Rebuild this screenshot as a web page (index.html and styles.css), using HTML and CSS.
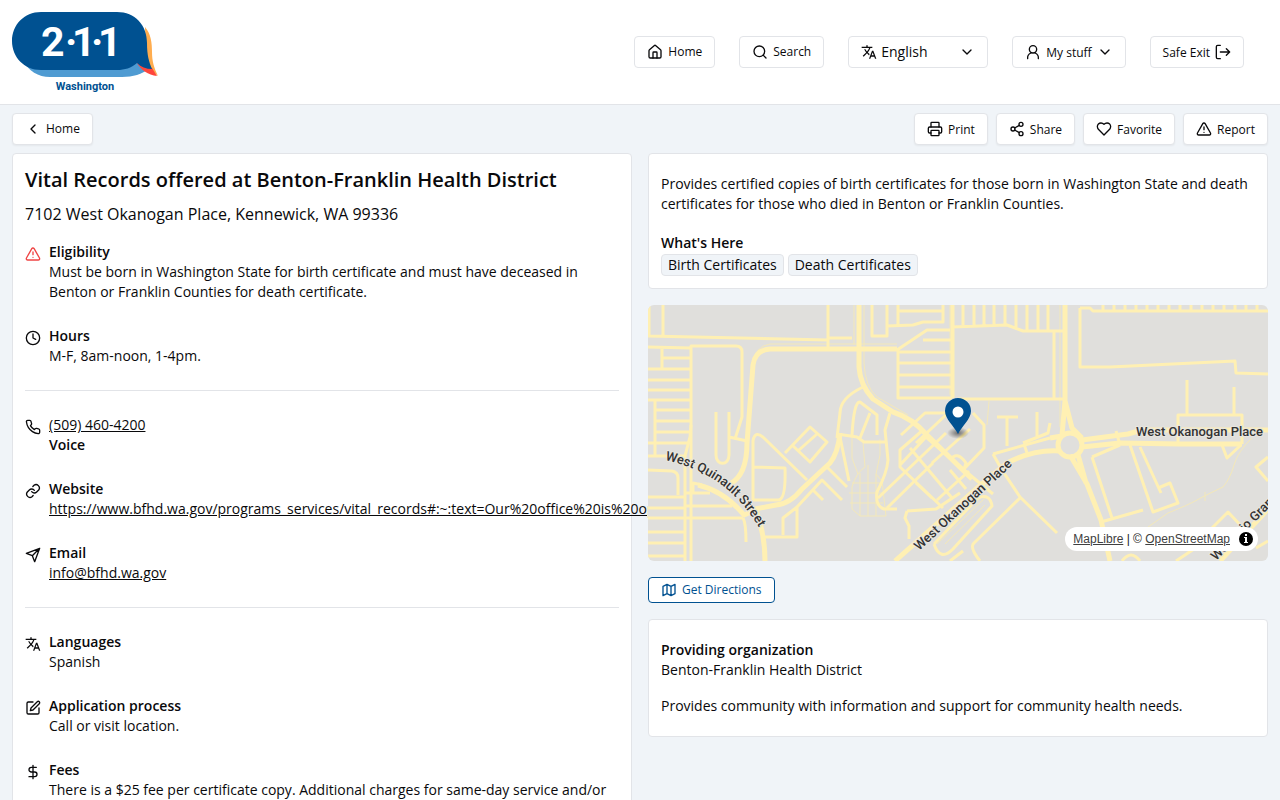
FILE: index.html
```html
<!DOCTYPE html>
<html lang="en">
<head>
    <meta charset="UTF-8">
    <meta name="viewport" content="width=device-width, initial-scale=1.0">
    <title>Vital Records offered at Benton-Franklin Health District</title>
    <link rel="stylesheet" href="styles.css">
</head>
<body>

<!-- Shared icons -->
<svg class="sprite" aria-hidden="true">
    <symbol id="i-home" viewBox="0 0 24 24"><path d="M15 21v-8a1 1 0 0 0-1-1h-4a1 1 0 0 0-1 1v8"/><path d="M3 10a2 2 0 0 1 .7-1.500l7-6a2 2 0 0 1 2.600 0l7 6A2 2 0 0 1 21 10v9a2 2 0 0 1-2 2H5a2 2 0 0 1-2-2z"/></symbol>
    <symbol id="i-search" viewBox="0 0 24 24"><circle cx="11" cy="11" r="8"/><path d="m21 21-4.300-4.300"/></symbol>
    <symbol id="i-lang" viewBox="0 0 24 24"><path class="solid" d="m12.900 15.100-2.600-2.500c1.800-2 3-4.200 3.800-6.500H17V4h-7V2H8v2H1v2h11.200C11.500 7.900 10.400 9.800 9 11.300 8.100 10.300 7.300 9.200 6.700 8h-2c.7 1.600 1.700 3.200 3 4.600l-5.100 5L4 19l5-5 3.100 3.100zM18.500 10h-2L12 22h2l1.100-3h4.800l1.100 3h2zm-2.600 7 1.600-4.300 1.600 4.300z"/></symbol>
    <symbol id="i-down" viewBox="0 0 24 24"><path d="m6 9 6 6 6-6"/></symbol>
    <symbol id="i-left" viewBox="0 0 24 24"><path d="m15 18-6-6 6-6"/></symbol>
    <symbol id="i-user" viewBox="0 0 24 24"><circle cx="12" cy="8" r="5.500"/><path d="M4 22a8 8 0 0 1 5-8.500M20 22a8 8 0 0 0-5-8.500"/></symbol>
    <symbol id="i-exit" viewBox="0 0 24 24"><path d="M8 22H4a2 2 0 0 1-2-2V4a2 2 0 0 1 2-2h4M8 12h14M17 7l5 5-5 5"/></symbol>
    <symbol id="i-print" viewBox="0 0 24 24"><path d="M6 18H4a2 2 0 0 1-2-2v-5a2 2 0 0 1 2-2h16a2 2 0 0 1 2 2v5a2 2 0 0 1-2 2h-2"/><path d="M6 9V3a1 1 0 0 1 1-1h10a1 1 0 0 1 1 1v6"/><rect x="6" y="14" width="12" height="8" rx="1"/></symbol>
    <symbol id="i-share" viewBox="0 0 24 24"><circle cx="18" cy="5" r="3"/><circle cx="6" cy="12" r="3"/><circle cx="18" cy="19" r="3"/><path d="m8.600 13.500 6.800 4M15.400 6.500l-6.800 4"/></symbol>
    <symbol id="i-heart" viewBox="0 0 24 24"><path d="M19 14c1.500-1.500 3-3.200 3-5.500A5.500 5.500 0 0 0 16.500 3c-1.800 0-3 .5-4.500 2-1.500-1.500-2.700-2-4.500-2A5.500 5.500 0 0 0 2 8.500c0 2.300 1.500 4 3 5.500l7 7z"/></symbol>
    <symbol id="i-warn" viewBox="0 0 24 24"><path d="m21.700 18-8-14a2 2 0 0 0-3.500 0l-8 14A2 2 0 0 0 4 21h16a2 2 0 0 0 1.700-3M12 9v4M12 17h.01"/></symbol>
    <symbol id="i-clock" viewBox="0 0 24 24"><circle cx="12" cy="12" r="10"/><path d="M12 6v6l4 2"/></symbol>
    <symbol id="i-phone" viewBox="0 0 24 24"><path d="M22 16.920v3a2 2 0 0 1-2.180 2 19.800 19.800 0 0 1-8.630-3.070 19.500 19.500 0 0 1-6-6A19.800 19.800 0 0 1 2.120 4.180 2 2 0 0 1 4.110 2h3a2 2 0 0 1 2 1.720c.13.960.36 1.900.7 2.810a2 2 0 0 1-.45 2.110L8.090 9.910a16 16 0 0 0 6 6l1.270-1.270a2 2 0 0 1 2.110-.45c.91.34 1.850.57 2.810.7A2 2 0 0 1 22 16.920z"/></symbol>
    <symbol id="i-link" viewBox="0 0 24 24"><path d="M10 13a5 5 0 0 0 7.500.5l3-3a5 5 0 0 0-7-7l-1.700 1.700"/><path d="M14 11a5 5 0 0 0-7.500-.5l-3 3a5 5 0 0 0 7 7l1.700-1.700"/></symbol>
    <symbol id="i-send" viewBox="0 0 24 24"><path d="M22 2 2 9.500l9 3.500 3.500 9zM22 2 11 13"/></symbol>
    <symbol id="i-edit" viewBox="0 0 24 24"><path d="M12 3H5a2 2 0 0 0-2 2v14a2 2 0 0 0 2 2h14a2 2 0 0 0 2-2v-7"/><path d="M18.400 2.600a2.100 2.100 0 0 1 3 3L12 15l-4 1 1-4z"/></symbol>
    <symbol id="i-dollar" viewBox="0 0 24 24"><path d="M12 2v20M17 5H9.500a3.500 3.500 0 0 0 0 7h5a3.500 3.500 0 0 1 0 7H6"/></symbol>
    <symbol id="i-map" viewBox="0 0 24 24"><path d="M3 6.500v14l6-3 6 3 6-3v-14l-6 3-6-3zM9 3.500v14M15 6.500v14"/></symbol>
</svg>

<header class="header">
    <a href="#" class="logo" aria-label="2-1-1 Washington">
        <svg width="146" height="80" viewBox="0 0 146 80">
            <path fill="#4f9bd2" d="M10 48C17 59 26 65 38 65H110C121 65 130 62 137 57L120 46Z"/>
            <path fill="#ffad4f" d="M133 15C139 22 140 31 140 40C140 49 142 56 146 64L134 54Z"/>
            <path fill="#ff463c" d="M125 51L140 56L145 64C136 63 129 58 125 51Z"/>
            <path fill="#005191" d="M29 0H105C123 0 135 13 135 31C135 43 137 50 140 57C134 57 129 55 125 51C119 56 113 58 105 58H29C12 58 0 45 0 29S12 0 29 0Z"/>
            <text class="logo-number" x="29 53 60 79 86" y="44">2·1·1</text>
            <text class="logo-name" x="73" y="78">Washington</text>
        </svg>
    </a>
    <nav class="nav">
        <a href="#" class="btn"><svg class="icon"><use href="#i-home"/></svg>Home</a>
        <a href="#" class="btn"><svg class="icon"><use href="#i-search"/></svg>Search</a>
        <div class="language">
            <svg class="icon"><use href="#i-lang"/></svg>
            <select aria-label="Language">
                <option>English</option>
            </select>
            <svg class="icon"><use href="#i-down"/></svg>
        </div>
        <button class="btn"><svg class="icon"><use href="#i-user"/></svg>My stuff<svg class="icon"><use href="#i-down"/></svg></button>
        <button class="btn">Safe Exit<svg class="icon"><use href="#i-exit"/></svg></button>
    </nav>
</header>

<div class="toolbar">
    <a href="#" class="btn"><svg class="icon"><use href="#i-left"/></svg>Home</a>
    <div class="actions">
        <button class="btn"><svg class="icon"><use href="#i-print"/></svg>Print</button>
        <button class="btn"><svg class="icon"><use href="#i-share"/></svg>Share</button>
        <button class="btn"><svg class="icon"><use href="#i-heart"/></svg>Favorite</button>
        <button class="btn"><svg class="icon"><use href="#i-warn"/></svg>Report</button>
    </div>
</div>

<main class="columns">
    <section class="card details">
        <h1>Vital Records offered at Benton-Franklin Health District</h1>
        <p class="address">7102 West Okanogan Place, Kennewick, WA 99336</p>

        <div class="group">
            <div class="item">
                <svg class="icon icon-alert"><use href="#i-warn"/></svg>
                <div>
                    <h2>Eligibility</h2>
                    <p>Must be born in Washington State for birth certificate and must have deceased in Benton or Franklin Counties for death certificate.</p>
                </div>
            </div>
            <div class="item">
                <svg class="icon"><use href="#i-clock"/></svg>
                <div>
                    <h2>Hours</h2>
                    <p>M-F, 8am-noon, 1-4pm.</p>
                </div>
            </div>
        </div>
        <hr>
        <div class="group">
            <div class="item">
                <svg class="icon"><use href="#i-phone"/></svg>
                <div>
                    <p><a href="#">(509) 460-4200</a></p>
                    <h2>Voice</h2>
                </div>
            </div>
            <div class="item">
                <svg class="icon"><use href="#i-link"/></svg>
                <div>
                    <h2>Website</h2>
                    <p><a href="#">https://www.bfhd.wa.gov/programs_services/vital_records#:~:text=Our%20office%20is%20open</a></p>
                </div>
            </div>
            <div class="item">
                <svg class="icon"><use href="#i-send"/></svg>
                <div>
                    <h2>Email</h2>
                    <p><a href="#">info@bfhd.wa.gov</a></p>
                </div>
            </div>
        </div>
        <hr>
        <div class="group">
            <div class="item">
                <svg class="icon"><use href="#i-lang"/></svg>
                <div>
                    <h2>Languages</h2>
                    <p>Spanish</p>
                </div>
            </div>
            <div class="item">
                <svg class="icon"><use href="#i-edit"/></svg>
                <div>
                    <h2>Application process</h2>
                    <p>Call or visit location.</p>
                </div>
            </div>
            <div class="item">
                <svg class="icon"><use href="#i-dollar"/></svg>
                <div>
                    <h2>Fees</h2>
                    <p>There is a $25 fee per certificate copy. Additional charges for same-day service and/or</p>
                </div>
            </div>
        </div>
    </section>

    <div class="side">
        <section class="card summary">
            <p>Provides certified copies of birth certificates for those born in Washington State and death certificates for those who died in Benton or Franklin Counties.</p>
            <div>
                <h2>What's Here</h2>
                <div class="tags">
                    <span class="tag">Birth Certificates</span>
                    <span class="tag">Death Certificates</span>
                </div>
            </div>
        </section>

        <div class="map">
            <svg class="map-canvas" viewBox="0 0 620 256" preserveAspectRatio="xMidYMid slice">
                <defs>
                    <path id="quinault" d="M17 155C55 163 92 184 116 232"/>
                    <path id="okanogan" d="M271 246L372 153"/>
                    <path id="grande" d="M568 256L640 184"/>
                    <radialGradient id="shade"><stop offset="0" stop-color="#000" stop-opacity=".5"/><stop offset="1" stop-color="#000" stop-opacity="0"/></radialGradient>
                </defs>

                <!-- Service lanes -->
                <g class="lane">
                    <path d="M604 133Q590 146 586 160T575 182Q558 190 549 195T520 208L500 222M557 187V196M204 132V153L210 169M215 137L217 162Q208 168 204 182V204L212 211H238L234 176 228 169 232 150V134M204 178H234M201 188H235M202 198H235M212 168V211M220 160V211M228 169V211M341 96L339 120M304 206L344 166M307 212L330 190M289 239L338 192M297 239L337 200"/>
                    <path d="M100 133L104 60Q107 41 122 39H249M206 0V40M216 0V58Q217 82 229 92L260 110M412 0V122M302 0V90"/>
                </g>

                <!-- Local streets -->
                <g class="street">
                    <path d="M1 0V32M15 0V31M0 31L180 35M180 0V44M180 33H204M0 42L43 43M43 256V41H88Q94 41 94 47V112L87 134M14 42V63M14 53H42M0 64H42M0 75H42M0 85H42M0 95H42M7 95V151M7 105H42M7 116H42M7 127H42M0 138H40"/>
                    <path d="M43 120L42 132 37 151V256M0 151H37M0 165L24 166Q30 167 30 173V190M0 192H36M0 203H36M0 213H36M0 227H36M0 238H36M0 251H36M37 188H62M45 188V178L54 180M37 201H84M37 213H95M95 213Q98 218 98 237"/>
                    <path d="M68 107V150C68 161 81 161 81 150V107M81 132L99 136M105 195V136Q107 124 117 134L159 175M105 162L137 163Q138 193 131 195H105M137 148L162 122 179 137 162 157 144 140M151 145L169 129M135 230V213L149 202V232H117M149 202L174 175 194 195M165 185L175 195M179 162L199 182M192 132L201 176"/>
                    <path d="M215 82Q192 93 192 108L189 133M204 130Q206 96 212 97L229 110V130M222 108L212 133M189 129L209 132 216 137H238M242 108L237 125 240 155Q239 168 229 187 227 201 236 204H249"/>
                    <path d="M224 0V31H239V0M250 0V20M250 6H295M239 21L265 20 275 17H295V0M249 45L279 25H302M304 0V93M275 35H303M250 45V93H304M250 47H303M250 58H303M250 70H303M250 82H303"/>
                    <path d="M253 130L277 108H300L268 138M275 125L252 145V162L295 203M252 160L278 132 310 160 345 189M230 193L275 150 298 128M239 203L285 158M262 143L304 193M268 178L284 193M284 158L322 124M289 195L321 166M259 206L288 204 312 188M259 206L257 213 261 221V234"/>
                    <path d="M305 0V93M304 22L359 20 375 26H415M315 0V20M326 0V20M336 0V20M346 0V20M357 0V20M368 0V22M379 0V26M390 0V26M400 0V26M406 26V94M310 94H417M325 108L336 120V143L315 165M302 155Q309 145 318 158L316 164M302 165L318 184M349 112H370M359 112V141M389 107V131M402 118L400 128 375 138"/>
                    <path d="M432 3V62H462L587 56 588 68 620 69M432 3H442L445 6H620M455 0V5M466 0V5M477 0V5M488 0V5M499 0V5M510 0V5M521 0V5M532 0V5M543 0V5M554 0V5M565 0V5M576 0V5M587 0V5M598 0V5M609 0V5M539 75V110M586 82V110M530 138V110H594V139"/>
                    <path d="M345 149L402 133M345 149L354 165 372 192 409 228M372 193L326 238Q321 242 332 256M376 139L379 148M444 152L472 140M444 152L464 213M453 217L495 205M482 140L505 207 530 198 522 178 510 183M492 142L513 188M574 140L579 153 593 140M620 152L608 162 620 176M562 225L580 207 596 224M608 243L620 236M474 256Q483 244 492 256M468 126L472 140"/>
                    <path d="M286 239L330 193Q342 188 344 201L305 244Q292 257 286 239M302 256L315 246M528 256L552 240"/>
                </g>

                <!-- Main roads -->
                <g class="road">
                    <path d="M211 0V62Q212 80 225 94L245 107Q264 113 279 130L324 174"/>
                    <path d="M249 44H122Q107 45 105 60L99 138Q99 170 82 179M102 205L128 200Q142 199 154 184L182 158Q190 148 192 128M50 180Q76 186 96 210L108 205Q117 230 117 256"/>
                    <path d="M417 0V96L414 130M417 96L424 123 434 133M434 135L480 129 494 125H620M434 142L472 138 532 139H594M412 146Q386 144 359 158L328 184 247 256M402 133L414 131"/>
                    <path d="M422 150L439 179 453 215 462 256M430 150L438 178M572 256L620 204"/>
                    <circle cx="422" cy="140" r="12"/>
                </g>

                <g class="map-label">
                    <text><textPath href="#quinault">West Quinault Street</textPath></text>
                    <text><textPath href="#okanogan">West Okanogan Place</textPath></text>
                    <text><textPath href="#grande">West Rio Grande</textPath></text>
                    <text x="488" y="131">West Okanogan Place</text>
                </g>

                <ellipse cx="310" cy="128" rx="11" ry="6" fill="url(#shade)"/>
                <path fill="#005191" d="M310 129C306 121 297 114 297 106A13 13 0 0 1 323 106C323 114 314 121 310 129Z"/>
                <circle cx="310" cy="107" r="5.500" fill="#fff"/>
            </svg>
            <div class="attribution">
                <span><a href="#">MapLibre</a> | © <a href="#">OpenStreetMap</a></span>
                <button aria-label="Toggle attribution">
                    <svg width="14" height="14" viewBox="0 0 14 14"><circle cx="7" cy="7" r="7"/><path fill="#fff" d="M6 2h2v2H6zM5 5h3v5h1v1H5v-1h1V6H5z"/></svg>
                </button>
            </div>
        </div>

        <a href="#" class="directions"><svg class="icon"><use href="#i-map"/></svg>Get Directions</a>

        <section class="card organization">
            <div>
                <h2>Providing organization</h2>
                <p>Benton-Franklin Health District</p>
            </div>
            <p>Provides community with information and support for community health needs.</p>
        </section>
    </div>
</main>

</body>
</html>
```

FILE: styles.css
```css
* {
    box-sizing: border-box;
}
body {
    margin: 0;
    background-color: #f0f4f8;
    color: #09090b;
    font-family: "Open Sans", "Noto Sans", sans-serif;
    font-size: 14px;
    line-height: 20px;
    overflow-x: hidden;
}
h1, h2, p {
    margin: 0;
}
h1 {
    font-size: 20px;
    line-height: 28px;
    font-weight: 600;
}
h2 {
    font-size: 14px;
    line-height: 20px;
    font-weight: 600;
}
a {
    color: inherit;
}
hr {
    width: 100%;
    height: 1px;
    margin: 24px 0;
    border: none;
    background-color: #e2e4e8;
}
.sprite {
    position: absolute;
    width: 0;
    height: 0;
}
.icon {
    width: 16px;
    height: 16px;
    flex-shrink: 0;
    fill: none;
    stroke: currentColor;
    stroke-width: 2;
    stroke-linecap: round;
    stroke-linejoin: round;
}
.solid {
    fill: currentColor;
    stroke: none;
}

/* Header */
.header {
    display: flex;
    align-items: center;
    justify-content: space-between;
    padding: 12px 36px 12px 12px;
    background-color: #fff;
    border-bottom: 1px solid #e2e4e8;
}
.logo svg {
    display: block;
    overflow: visible;
}
.logo-number {
    fill: #fff;
    font-family: Roboto, sans-serif;
    font-size: 41px;
    font-weight: 700;
}
.logo-name {
    fill: #005191;
    font-family: Roboto, sans-serif;
    font-size: 11px;
    font-weight: 700;
    text-anchor: middle;
}
.nav {
    display: flex;
    gap: 24px;
}
.btn {
    display: inline-flex;
    align-items: center;
    gap: 5px;
    height: 32px;
    padding: 0 12px;
    border: 1px solid #e2e4e8;
    border-radius: 4px;
    background-color: #fff;
    color: #09090b;
    font-family: inherit;
    font-size: 12px;
    text-decoration: none;
    white-space: nowrap;
    cursor: pointer;
}
.language {
    display: flex;
    align-items: center;
    width: 140px;
    height: 32px;
    padding: 0 12px;
    border: 1px solid #e2e4e8;
    border-radius: 4px;
}
.language select {
    flex: 1;
    min-width: 0;
    padding: 0 4px;
    border: none;
    background: none;
    appearance: none;
    color: inherit;
    font-family: inherit;
    font-size: 14px;
    line-height: 20px;
}

/* Toolbar */
.toolbar {
    display: flex;
    justify-content: space-between;
    padding: 8px 12px;
}
.toolbar .btn {
    box-shadow: 0 1px 2px rgba(0, 0, 0, 0.05);
}
.actions {
    display: flex;
    gap: 8px;
}

/* Content */
.columns {
    display: grid;
    grid-template-columns: minmax(0, 1fr) minmax(0, 1fr);
    gap: 16px;
    padding: 0 12px 12px;
}
.card {
    padding: 12px;
    border: 1px solid #e2e4e8;
    border-radius: 4px;
    background-color: #fff;
}
.address {
    margin: 8px 0 16px;
    font-size: 16px;
    line-height: 24px;
}
.group {
    display: flex;
    flex-direction: column;
    gap: 24px;
}
.item {
    display: flex;
    gap: 8px;
}
.item .icon {
    margin-top: 4px;
}
.icon-alert {
    color: #ef4444;
}
.side {
    display: flex;
    flex-direction: column;
    align-items: stretch;
    gap: 16px;
    min-width: 0;
}
.summary {
    display: flex;
    flex-direction: column;
    gap: 19px;
    padding-top: 20px;
}
.tags {
    display: flex;
    gap: 4px;
    margin-top: 1px;
}
.tag {
    padding: 0 6px;
    border: 1px solid #e2e4e8;
    border-radius: 4px;
    background-color: #f0f4f8;
}
.organization {
    display: flex;
    flex-direction: column;
    gap: 16px;
    padding: 20px 12px;
}
.directions {
    display: flex;
    align-items: center;
    align-self: flex-start;
    gap: 5px;
    height: 26px;
    padding: 0 12px;
    border: 1px solid #005191;
    border-radius: 4px;
    background-color: #fff;
    color: #005191;
    font-size: 12px;
    text-decoration: none;
}

/* Map */
.map {
    position: relative;
    height: 256px;
    border-radius: 6px;
    overflow: hidden;
    background-color: #e0dfdc;
}
.map-canvas {
    display: block;
    width: 100%;
    height: 100%;
}
.lane, .street, .road {
    fill: none;
    stroke: #fff0b3;
    stroke-linejoin: round;
}
.lane {
    stroke-width: 1;
    stroke: #f3e8b9;
}
.street {
    stroke-width: 3;
}
.road {
    stroke-width: 5;
}
.map-label {
    fill: #333;
    stroke: #e8e6df;
    stroke-width: 2;
    paint-order: stroke;
    font-family: Roboto, sans-serif;
    font-size: 13px;
    font-weight: 500;
}
.attribution {
    position: absolute;
    right: 10px;
    bottom: 10px;
    display: flex;
    align-items: center;
    gap: 9px;
    height: 24px;
    padding: 0 5px 0 8px;
    border-radius: 12px;
    background-color: #fff;
    color: #222;
    font-family: "Liberation Sans", Arial, sans-serif;
    font-size: 12px;
}
.attribution a {
    color: #404040;
}
.attribution button {
    display: flex;
    padding: 0;
    border: none;
    background: none;
}
```
